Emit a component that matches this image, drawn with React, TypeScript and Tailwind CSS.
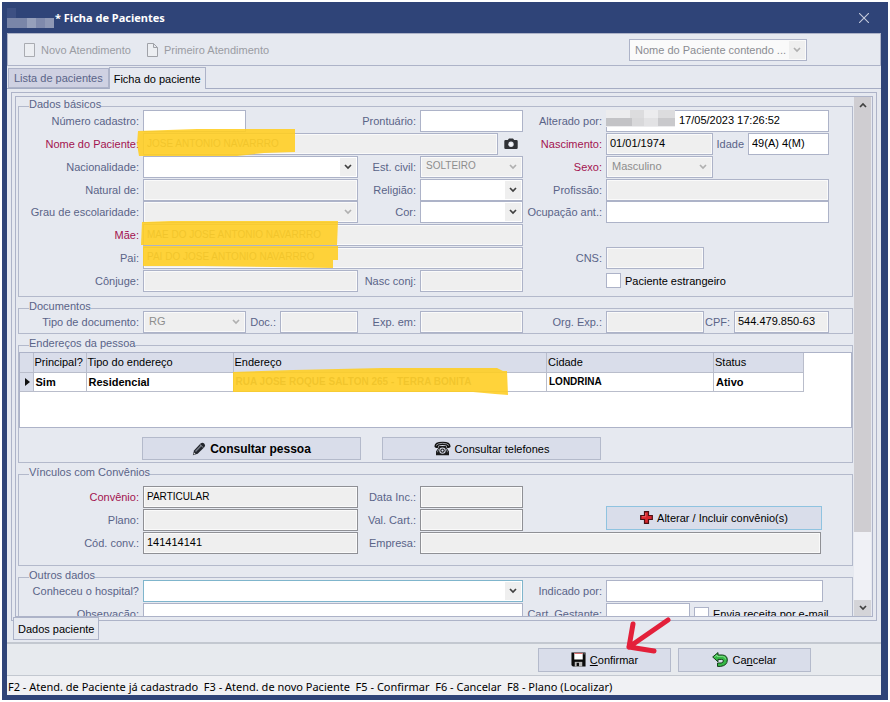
import type { ReactNode } from "react";
import clsx from "clsx";

const grid = "grid grid-cols-[124px_215fr_62px_103fr_83px_223fr_23px] items-center";

const Chevron = ({ muted = false, up = false }: { muted?: boolean; up?: boolean }) => (
  <svg width="8" height="6" viewBox="0 0 8 6" fill="none" className={up ? "rotate-180" : ""}>
    <path d="M1 1l3 3 3-3" stroke={muted ? "#b0b0b0" : "#404040"} strokeWidth="1.7" />
  </svg>
);

const Label = ({ id, required = false, children }: { id: string; required?: boolean; children: ReactNode }) => (
  <label
    htmlFor={id}
    className={clsx("whitespace-nowrap pr-1 text-right", required ? "text-[#a3134f]" : "text-[#5a6488]")}
  >
    {children}
  </label>
);

type FieldProps = {
  id: string;
  value?: string;
  gray?: boolean;
  dark?: boolean;
  className?: string;
};

const TextField = ({ id, value = "", gray = false, dark = false, className = "w-full" }: FieldProps) => (
  <input
    id={id}
    type="text"
    defaultValue={value}
    readOnly={gray}
    className={clsx(
      "h-[22px] min-w-0 border px-[3px] pb-[2px] outline-none",
      dark ? "border-[#8f9095]" : "border-[#adb3c8]",
      gray ? "bg-[#efefef] shadow-[inset_0_0_0_1px_#fafafa]" : "bg-white",
      className
    )}
  />
);

type SelectProps = {
  id: string;
  value?: string;
  disabled?: boolean;
  focused?: boolean;
  className?: string;
};

const SelectField = ({ id, value = "", disabled = false, focused = false, className = "w-full" }: SelectProps) => (
  <div className={clsx("relative min-w-0", className)}>
    <select
      id={id}
      disabled={disabled}
      className={clsx(
        "block h-[22px] w-full appearance-none border pb-[2px] pl-[5px] pr-5 opacity-100 outline-none",
        focused ? "border-[#7fb5cc]" : "border-[#adb3c8]",
        disabled ? "bg-[#efefef] text-[#8d8d8d] shadow-[inset_0_0_0_1px_#fafafa]" : "bg-white text-black"
      )}
    >
      <option>{value}</option>
    </select>
    <span className="pointer-events-none absolute inset-y-[2px] right-[2px] flex w-4 items-center justify-center bg-[#efefef]">
      <Chevron muted={disabled} />
    </span>
  </div>
);

const Group = ({ title, className, children }: { title: string; className?: string; children: ReactNode }) => (
  <fieldset className={clsx("relative border border-[#b3b9cb]", className)}>
    <legend className="absolute -top-[10px] left-[10px] bg-[#e6e9f0] leading-[14px] text-[#5a6488]">{title}</legend>
    {children}
  </fieldset>
);

// Highlighter strokes drawn over personal data
const Marker = ({ width, height, d, className }: { width: number; height: number; d: string; className: string }) => (
  <svg
    width={width}
    height={height}
    viewBox={`0 0 ${width} ${height}`}
    className={clsx("pointer-events-none absolute z-10", className)}
  >
    <path d={d} fill="#ffce22" fillOpacity="0.89" />
  </svg>
);

const PencilIcon = () => (
  <svg width="14" height="14" viewBox="0 0 14 14">
    <path d="M.8 13.200l1.200-4.700L8.500 1.500q2-1.500 3.700 0t.3 3.500L5.700 11.800z" fill="#22252c" />
    <path d="M3.500 9.500l5.700-6" stroke="#777b86" strokeWidth="1.400" />
    <path d="M8 2.500l3.500 3.300" stroke="#b9bcc6" strokeWidth=".7" />
    <path d="M1.500 12.500l.6-2 1.500 1.400z" fill="#ddd" />
  </svg>
);

const PhoneIcon = () => (
  <svg width="17" height="15" viewBox="0 0 17 15">
    <path d="M.6 6Q-.4.8 8.500.7T16.400 6q-1.600 1.600-3.700.4V4.700q-4.200-1.400-8.400 0v1.700Q2.200 7.600.6 6z" fill="#111" />
    <path d="M2 4.500Q3.500 2.300 8.500 2.300T15 4.500" stroke="#b5b8c2" strokeWidth=".8" fill="none" />
    <path d="M5.200 5h6.600l.8 1.800 2.400 3.700v3.800H2v-3.800l2.400-3.700z" fill="#1b1b1b" />
    <circle cx="8.500" cy="9.600" r="3.200" fill="#d9ddea" />
    <circle cx="8.500" cy="9.600" r="2.200" fill="#1b1b1b" />
    <circle cx="8.500" cy="9.600" r="1.100" fill="#d9ddea" />
    <path d="M3.300 11.300l1.500-3.600M13.700 11.300l-1.500-3.600" stroke="#9b9ea8" strokeWidth=".8" />
  </svg>
);

const CameraIcon = () => (
  <svg width="14" height="12" viewBox="0 0 14 12">
    <path d="M1.500 2h2.300L5 .5h4L10.200 2h2.300q1.200 0 1.200 1.200v6.600q0 1.200-1.200 1.200h-11Q.3 11 .3 9.800V3.200Q.3 2 1.500 2z" fill="#303236" />
    <circle cx="7" cy="6.300" r="2.700" fill="#e6e9f0" />
    <circle cx="7" cy="6.300" r="1.500" fill="#f7f8fb" />
  </svg>
);

const CrossIcon = () => (
  <svg width="13" height="13" viewBox="0 0 13 13">
    <path d="M4.500.7h4v3.800h3.800v4H8.500v3.800h-4V8.500H.7v-4h3.800z" fill="#d9262e" stroke="#4a1014" strokeWidth="1.200" />
    <path d="M5.700 2v3.700H2" stroke="#f0686c" fill="none" strokeWidth=".8" />
  </svg>
);

const FloppyIcon = () => (
  <svg width="15" height="15" viewBox="0 0 16 16">
    <path d="M.5.5h15v15H2l-1.500-1.500z" fill="#0b0b0b" />
    <path d="M3.500 1h9v7h-9z" fill="#fff" />
    <path d="M3.500 1h9v1h-9z" fill="#d55a5a" />
    <path d="M4 10.500h8v5H4z" fill="#b9b9b9" />
    <path d="M6 11.500h2.500v3.500H6z" fill="#0b0b0b" />
    <path d="M13.500 1.500h1v1h-1z" fill="#fff" />
  </svg>
);

const UndoIcon = () => (
  <svg width="16" height="15" viewBox="0 0 16 15">
    <path
      d="M.7 5L6 .6v2.400h4.500q4.800.4 4.800 5 0 5.600-6.800 6.400H5.500v-3.400h3.700q2.200-.4 2.200-2.200 0-1.300-1.800-1.400H6v2.400z"
      fill="#35b845"
      stroke="#143d1a"
      strokeWidth="1"
      strokeLinejoin="round"
    />
    <path d="M2.500 5L5 3v1.400h5.500q3 .3 3.200 3" stroke="#8ee697" strokeWidth=".8" fill="none" />
  </svg>
);

const buttonClass = "flex items-center justify-center gap-1 border border-[#b4bacb] bg-[#d9ddea] text-black";

const cellClass = "border-b border-r border-[#b9bdcb] p-0 pl-[2px]";

const columns = ["Principal?", "Tipo do endereço", "Endereço", "Cidade", "Status"];

const BasicData = () => (
  <Group title="Dados básicos" className="pb-1 pt-[3px]">
    <div className="grid h-[182px] grid-rows-8">
      <div className={grid}>
        <Label id="numero">Número cadastro:</Label>
        <TextField id="numero" className="w-[103px]" />
        <Label id="prontuario">Prontuário:</Label>
        <TextField id="prontuario" />
        <Label id="alterado">Alterado por:</Label>
        <div className="relative">
          <TextField id="alterado" value="17/05/2023 17:26:52" className="w-full pl-[72px]" />
          <svg width="69" height="17" viewBox="0 0 69 17" className="absolute left-0 top-0">
            <path d="M0 0h69v17H0z" fill="#ececee" />
            <path d="M24 0h14v8H24zM52 0h17v8H52z" fill="#dcdcde" />
            <path d="M0 8h26v8H0z" fill="#c3c3c6" />
            <path d="M26 8h12v8H26z" fill="#d8d8da" />
            <path d="M38 8h14v8H38z" fill="#e2e2e4" />
            <path d="M52 8h17v8H52z" fill="#c9c9cc" />
          </svg>
        </div>
      </div>
      <div className={grid}>
        <Label id="nome" required>Nome do Paciente:</Label>
        <div className="relative col-span-3 flex items-center">
          <TextField id="nome" value="JOSE ANTONIO NAVARRRO" gray className="flex-1 text-[10px] text-[#808080]" />
          <button type="button" aria-label="Foto" className="flex w-[25px] justify-center">
            <CameraIcon />
          </button>
          <Marker width={158} height={27} d="M1 2L60 0 158 0V23L127 24 100 27H2L0 15z" className="-left-[6px] -top-[4px]" />
        </div>
        <Label id="nascimento" required>Nascimento:</Label>
        <div className="flex items-center">
          <TextField id="nascimento" value="01/01/1974" gray className="w-[107px]" />
          <span className="flex-1 text-right"><Label id="idade">Idade</Label></span>
          <TextField id="idade" value="49(A) 4(M)" className="w-[81px]" />
        </div>
      </div>
      <div className={grid}>
        <Label id="nacionalidade">Nacionalidade:</Label>
        <SelectField id="nacionalidade" />
        <Label id="civil">Est. civil:</Label>
        <SelectField id="civil" value="SOLTEIRO" disabled className="w-full text-[10px]" />
        <Label id="sexo" required>Sexo:</Label>
        <SelectField id="sexo" value="Masculino" disabled className="w-[107px]" />
      </div>
      <div className={grid}>
        <Label id="natural">Natural de:</Label>
        <TextField id="natural" gray />
        <Label id="religiao">Religião:</Label>
        <SelectField id="religiao" />
        <Label id="profissao">Profissão:</Label>
        <TextField id="profissao" gray />
      </div>
      <div className={grid}>
        <Label id="escolaridade">Grau de escolaridade:</Label>
        <SelectField id="escolaridade" disabled />
        <Label id="cor">Cor:</Label>
        <SelectField id="cor" />
        <Label id="ocupacao">Ocupação ant.:</Label>
        <TextField id="ocupacao" />
      </div>
      <div className={grid}>
        <Label id="mae" required>Mãe:</Label>
        <div className="relative col-span-3 flex">
          <TextField id="mae" value="MAE DO JOSE ANTONIO NAVARRRO" gray className="flex-1 text-[10px] text-[#808080]" />
          <Marker width={197} height={24} d="M1 1L30 0 197 0 196 24H0z" className="-left-[2px] -top-[3px]" />
        </div>
      </div>
      <div className={grid}>
        <Label id="pai">Pai:</Label>
        <div className="relative col-span-3 flex">
          <TextField id="pai" value="PAI DO JOSE ANTONIO NAVARRRO" gray className="flex-1 text-[10px] text-[#808080]" />
          <Marker width={195} height={23} d="M0 1H195V15H190V23L130 22 60 21 0 21z" className="-top-[2px] left-0" />
        </div>
        <Label id="cns">CNS:</Label>
        <TextField id="cns" gray className="w-[98px]" />
      </div>
      <div className={grid}>
        <Label id="conjuge">Cônjuge:</Label>
        <TextField id="conjuge" gray />
        <Label id="nascconj">Nasc conj:</Label>
        <TextField id="nascconj" gray />
        <label className="col-start-6 flex items-center gap-1 text-black">
          <input type="checkbox" className="size-[15px] appearance-none border border-[#adb3c8] bg-white" />
          Paciente estrangeiro
        </label>
      </div>
    </div>
  </Group>
);

const Documents = () => (
  <Group title="Documentos" className="pt-[2px]">
    <div className={grid}>
      <Label id="tipodoc">Tipo de documento:</Label>
      <div className="flex items-center">
        <SelectField id="tipodoc" value="RG" disabled className="w-[103px]" />
        <span className="flex-1 text-right"><Label id="doc">Doc.:</Label></span>
        <TextField id="doc" gray className="w-[78px]" />
      </div>
      <Label id="expem">Exp. em:</Label>
      <TextField id="expem" gray />
      <Label id="orgexp">Org. Exp.:</Label>
      <div className="flex items-center">
        <TextField id="orgexp" gray className="w-[98px]" />
        <span className="flex-1 text-right"><Label id="cpf">CPF:</Label></span>
        <TextField id="cpf" value="544.479.850-63" gray className="w-[95px]" />
      </div>
    </div>
  </Group>
);

const Addresses = () => (
  <Group title="Endereços da pessoa" className="pb-[2px] pt-[6px]">
    <div className="h-[76px] border border-[#adb3c8] bg-white pr-[47px]">
      <table className="w-full table-fixed border-collapse text-black">
        <colgroup>
          <col className="w-[13px]" />
          <col className="w-[53px]" />
          <col className="w-[147px]" />
          <col />
          <col className="w-[167px]" />
          <col className="w-[90px]" />
        </colgroup>
        <thead>
          <tr className="h-[19px] bg-[#d9ddea]">
            <th className={cellClass} />
            {columns.map((name) => (
              <th key={name} className="border-b border-r border-[#b9bdcb] p-0 pl-px text-left font-normal">
                {name}
              </th>
            ))}
          </tr>
        </thead>
        <tbody>
          <tr className="h-[19px] font-bold">
            <td className={clsx(cellClass, "bg-[#d9ddea]")}>
              <svg width="5" height="8" viewBox="0 0 5 8" className="ml-[3px]">
                <path d="M0 0l5 4-5 4z" fill="#111" />
              </svg>
            </td>
            <td className={cellClass}>Sim</td>
            <td className={cellClass}>Residencial</td>
            <td className={clsx(cellClass, "relative text-[10px] text-[#808080]")}>
              RUA JOSE ROQUE SALTON 265 - TERRA BONITA
              <Marker
                width={275}
                height={27}
                d="M0 4L60 2 150 0H264L270 3H274L275 27L262 26 240 24H90L0 24z"
                className="-left-px -top-[5px]"
              />
            </td>
            <td className={clsx(cellClass, "text-[10px]")}>LONDRINA</td>
            <td className={cellClass}>Ativo</td>
          </tr>
        </tbody>
      </table>
    </div>
    <div className="mt-[9px] flex gap-[21px] pl-[123px]">
      <button type="button" className={clsx(buttonClass, "h-[23px] w-[219px] text-[12px] font-bold")}>
        <PencilIcon />
        Consultar pessoa
      </button>
      <button type="button" className={clsx(buttonClass, "h-[23px] w-[219px]")}>
        <PhoneIcon />
        Consultar telefones
      </button>
    </div>
  </Group>
);

const Plans = () => (
  <Group title="Vínculos com Convênios" className="py-[11px]">
    <div className="grid h-[68px] grid-rows-3">
      <div className={grid}>
        <Label id="convenio" required>Convênio:</Label>
        <TextField id="convenio" value="PARTICULAR" gray dark className="w-full text-[10px]" />
        <Label id="datainc">Data Inc.:</Label>
        <TextField id="datainc" gray dark />
      </div>
      <div className={grid}>
        <Label id="plano">Plano:</Label>
        <TextField id="plano" gray dark />
        <Label id="valcart">Val. Cart.:</Label>
        <TextField id="valcart" gray dark />
        <button
          type="button"
          className="col-start-6 -mt-1 mr-[7px] flex h-6 items-center justify-center gap-1 border border-[#8fc3e0] bg-[#d9ddea] text-black"
        >
          <CrossIcon />
          Alterar / Incluir convênio(s)
        </button>
      </div>
      <div className={grid}>
        <Label id="codconv">Cód. conv.:</Label>
        <TextField id="codconv" value="141414141" gray dark />
        <Label id="empresa">Empresa:</Label>
        <div className="col-span-3 flex pr-2">
          <TextField id="empresa" gray dark className="flex-1" />
        </div>
      </div>
    </div>
  </Group>
);

const OtherData = () => (
  <Group title="Outros dados" className="grid gap-px pb-2 pt-[2px]">
    <div className={grid}>
      <Label id="hospital">Conheceu o hospital?</Label>
      <div className="col-span-3">
        <SelectField id="hospital" focused />
      </div>
      <Label id="indicado">Indicado por:</Label>
      <div className="flex pr-[6px]">
        <TextField id="indicado" className="flex-1" />
      </div>
    </div>
    <div className={grid}>
      <Label id="observacao">Observação:</Label>
      <div className="col-span-3 flex">
        <TextField id="observacao" className="flex-1" />
      </div>
      <Label id="gestante">Cart. Gestante:</Label>
      <div className="flex items-center gap-1">
        <TextField id="gestante" className="w-[84px]" />
        <label className="flex items-center gap-1 whitespace-nowrap text-black">
          <input type="checkbox" className="size-[15px] appearance-none border border-[#adb3c8] bg-white" />
          Envia receita por e-mail
        </label>
      </div>
    </div>
  </Group>
);

const ScrollBar = () => (
  <div className="flex w-[17px] shrink-0 flex-col bg-[#f0f1f6]">
    <button type="button" aria-label="Rolar para cima" className="flex h-4 items-center justify-center bg-[#cfcdd1]">
      <Chevron up />
    </button>
    <div className="flex-1">
      <div className="h-[86%] bg-[#cfcdd1]" />
    </div>
    <button type="button" aria-label="Rolar para baixo" className="flex h-4 items-center justify-center bg-[#d4d4d8]">
      <Chevron />
    </button>
  </div>
);

const App = () => {
  return (
    <div className="h-screen bg-white p-[2px] font-['Liberation_Sans',Arial,sans-serif] text-[11px] leading-[14px] text-black">
      <div className="flex h-full flex-col bg-[#2f4478] pb-[5px] pl-[5px] pr-[7px]">
        {/* Title bar */}
        <header className="flex h-[31px] shrink-0 items-center justify-between pr-3">
          <div className="flex items-center">
            <svg width="48" height="20" viewBox="0 0 48 20">
              <path d="M0 0h9v10H0z" fill="#3d5083" />
              <path d="M0 10h20v10H0z" fill="#7a86a8" />
              <path d="M20 10h9v10h-9z" fill="#96a0bb" />
              <path d="M29 10h9v10h-9z" fill="#7f8aac" />
              <path d="M38 10h9v10h-9z" fill="#8e98b5" />
            </svg>
            <h1 className="font-['Noto_Sans',sans-serif] text-[11px] font-bold text-white">* Ficha de Pacientes</h1>
          </div>
          <button type="button" aria-label="Fechar">
            <svg width="10" height="10" viewBox="0 0 10 10">
              <path d="M0 0l10 10M10 0L0 10" stroke="#c5cbdb" strokeWidth="1.100" />
            </svg>
          </button>
        </header>

        <div className="flex min-h-0 flex-1 flex-col bg-[#e6e9f0]">
          {/* Toolbar */}
          <div className="flex h-[33px] shrink-0 items-center border border-[#adb3c8] pl-4 text-[#9a9ca3]">
            <button type="button" className="flex items-center gap-[6px]">
              <svg width="11" height="14" viewBox="0 0 11 14">
                <path d="M.5.5h10v13H.5z" fill="#eceef2" stroke="#a9abb1" />
              </svg>
              Novo Atendimento
            </button>
            <button type="button" className="ml-4 flex items-center gap-[6px]">
              <svg width="11" height="14" viewBox="0 0 11 14">
                <path d="M.5.5h6l4 4v9H.5zM6.500.5v4h4" fill="#eceef2" stroke="#a0a2a8" />
              </svg>
              Primeiro Atendimento
            </button>
            <div className="relative ml-auto mr-[73px] w-[178px]">
              <select
                disabled
                aria-label="Pesquisar por"
                className="block h-[22px] w-full appearance-none border border-[#adb3c8] bg-[#fafafa] pl-[5px] text-[#8a8c92] opacity-100"
              >
                <option>Nome do Paciente contendo ...</option>
              </select>
              <span className="absolute inset-y-[2px] right-[2px] flex w-4 items-center justify-center bg-[#efefef]">
                <Chevron muted />
              </span>
            </div>
          </div>

          {/* Tabs */}
          <nav className="flex h-[22px] shrink-0 items-end pl-px">
            <button type="button" className="h-5 border border-[#adb3c8] bg-[#cfd1e2] px-[5px] text-[#5a6488]">
              Lista de pacientes
            </button>
            <button
              type="button"
              className="relative z-10 -mb-px h-[22px] border border-b-0 border-[#adb3c8] bg-[#e6e9f0] px-1 text-black"
            >
              Ficha do paciente
            </button>
          </nav>

          <main className="flex min-h-0 flex-1 flex-col border-t border-[#a5acc3] px-1 pt-[3px]">
            <div className="min-h-0 flex-1 border border-[#adb3c8] p-[3px]">
              <div className="flex h-full border border-[#adb3c8] pl-[2px] pr-px">
                <div className="mr-px flex min-w-0 flex-1 flex-col gap-[11px] overflow-y-scroll pt-[9px] [scrollbar-width:none]">
                  <BasicData />
                  <Documents />
                  <Addresses />
                  <Plans />
                  <OtherData />
                </div>
                <ScrollBar />
              </div>
            </div>
            <div className="flex h-[21px] shrink-0 pl-[2px]">
              <button
                type="button"
                className="relative -mt-1 h-[23px] border border-[#adb3c8] bg-[#e6e9f0] px-1 text-black"
              >
                Dados paciente
              </button>
            </div>
          </main>

          {/* Actions */}
          <footer className="shrink-0">
            <div className="flex h-[34px] items-center justify-end gap-[7px] border-b border-t-2 border-[#c3c8d0] bg-[#e7eaee] pr-[70px]">
              <button type="button" className={clsx(buttonClass, "relative h-6 w-[133px]")}>
                <FloppyIcon />
                <span><u>C</u>onfirmar</span>
                <svg
                  width="48"
                  height="40"
                  viewBox="0 0 48 40"
                  fill="none"
                  className="pointer-events-none absolute -right-[2px] -top-[34px] z-20"
                >
                  <path
                    d="M44 5L5 32M9 9L5 32 30 36"
                    stroke="#e3203a"
                    strokeWidth="5"
                    strokeLinecap="round"
                    strokeLinejoin="round"
                  />
                </svg>
              </button>
              <button type="button" className={clsx(buttonClass, "h-6 w-[133px]")}>
                <UndoIcon />
                <span>Ca<u>n</u>celar</span>
              </button>
            </div>
            <p className="h-[19px] truncate bg-[#f0f1f4] pl-px font-['Noto_Sans',sans-serif] leading-[21px] text-black">
              F2 - Atend. de Paciente já cadastrado&nbsp; F3 - Atend. de novo Paciente&nbsp; F5 - Confirmar&nbsp; F6 -
              Cancelar&nbsp; F8 - Plano (Localizar)
            </p>
          </footer>
        </div>
      </div>
    </div>
  );
};

export default App;
